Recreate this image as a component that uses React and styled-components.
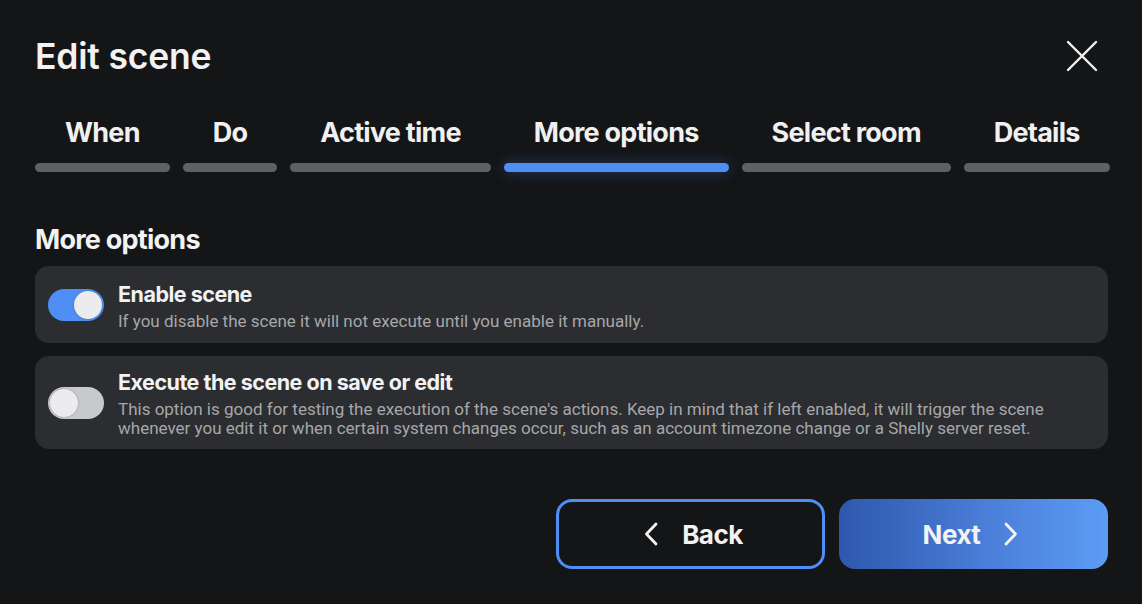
import React, { useState } from "react";
import styled, { createGlobalStyle } from "styled-components";

const GlobalStyle = createGlobalStyle`
  html, body {
    margin: 0;
    padding: 0;
    background: #141517;
  }
  body {
    font-family: "Inter", "Roboto", sans-serif;
    color: #f2f2f2;
  }
  * {
    box-sizing: border-box;
  }
`;

const steps = ["When", "Do", "Active time", "More options", "Select room", "Details"];

function CloseIcon() {
  return (
    <svg width="32" height="32" viewBox="0 0 32 32" fill="none">
      <path d="M2 2L30 30M30 2L2 30" stroke="#f4f4f4" strokeWidth="2.4" strokeLinecap="round" />
    </svg>
  );
}

function Chevron({ dir }) {
  const d = dir === "left" ? "M12 2L2.5 12L12 22" : "M2 2L11.5 12L2 22";
  return (
    <svg width="14" height="24" viewBox="0 0 14 24" fill="none">
      <path d={d} stroke="#f4f4f4" strokeWidth="2.8" strokeLinecap="round" strokeLinejoin="round" />
    </svg>
  );
}

function App() {
  const [enabled, setEnabled] = useState(true);
  const [runOnSave, setRunOnSave] = useState(false);

  return (
    <>
      <GlobalStyle />
      <Dialog>
        <Header>
          <Title>Edit scene</Title>
          <CloseButton aria-label="Close">
            <CloseIcon />
          </CloseButton>
        </Header>

        <Stepper>
          {steps.map((s) => (
            <Step key={s}>
              <span>{s}</span>
              <StepBar $active={s === "More options"} />
            </Step>
          ))}
        </Stepper>

        <SectionTitle>More options</SectionTitle>

        <OptionList>
          <OptionCard>
            <Toggle $on={enabled} onClick={() => setEnabled(!enabled)} />
            <OptionText>
              <h5>Enable scene</h5>
              <p>If you disable the scene it will not execute until you enable it manually.</p>
            </OptionText>
          </OptionCard>
          <OptionCard>
            <Toggle $on={runOnSave} onClick={() => setRunOnSave(!runOnSave)} />
            <OptionText>
              <h5>Execute the scene on save or edit</h5>
              <p>
                This option is good for testing the execution of the scene's actions. Keep in mind
                that if left enabled, it will trigger the scene whenever you edit it or when certain
                system changes occur, such as an account timezone change or a Shelly server reset.
              </p>
            </OptionText>
          </OptionCard>
        </OptionList>

        <Footer>
          <NavButton $variant="outline">
            <Chevron dir="left" />
            <span>Back</span>
          </NavButton>
          <NavButton $variant="primary">
            <span>Next</span>
            <Chevron dir="right" />
          </NavButton>
        </Footer>
      </Dialog>
    </>
  );
}

const Dialog = styled.div`
  width: 1142px;
  height: 604px;
  padding: 30px 34px 0 35px;
  display: flex;
  flex-direction: column;
`;

const Header = styled.div`
  display: flex;
  align-items: center;
  justify-content: space-between;
  height: 52px;
`;

const Title = styled.h1`
  margin: 0;
  font-size: 35.5px;
  font-weight: 600;
  letter-spacing: -0.2px;
  color: #f2f2f2;
`;

const CloseButton = styled.button`
  background: none;
  border: none;
  padding: 0;
  margin-right: 10px;
  width: 32px;
  height: 32px;
  display: flex;
  cursor: pointer;
`;

const Stepper = styled.div`
  display: flex;
  gap: 13px;
  margin-top: 35px;
`;

const Step = styled.div`
  display: flex;
  flex-direction: column;
  align-items: center;
  gap: 14px;

  span {
    padding: 0 30px;
    font-size: 27px;
    font-weight: 700;
    letter-spacing: -0.75px;
    line-height: 32px;
    color: #f0f0f0;
    white-space: nowrap;
  }
`;

const StepBar = styled.div`
  width: 100%;
  height: 9px;
  border-radius: 5px;
  background: ${(p) => (p.$active ? "#4f8ef5" : "#5e6064")};
  box-shadow: ${(p) => (p.$active ? "0 0 14px rgba(79, 142, 245, 0.35)" : "none")};
`;

const SectionTitle = styled.h2`
  margin: 52px 0 0;
  font-size: 27px;
  font-weight: 700;
  letter-spacing: -0.75px;
  line-height: 32px;
  color: #f2f2f2;
`;

const OptionList = styled.div`
  display: flex;
  flex-direction: column;
  gap: 13px;
  margin-top: 10px;
`;

const OptionCard = styled.div`
  display: flex;
  align-items: center;
  gap: 14px;
  padding: 11px 13px;
  min-height: 77px;
  background: #2c2d30;
  border-radius: 14px;
`;

const Toggle = styled.button`
  position: relative;
  flex-shrink: 0;
  width: 56px;
  height: 32px;
  border: none;
  border-radius: 16px;
  padding: 0;
  cursor: pointer;
  background: ${(p) => (p.$on ? "#4f8ef5" : "#c8c9cc")};

  &::after {
    content: "";
    position: absolute;
    top: 2px;
    left: ${(p) => (p.$on ? "26px" : "2px")};
    width: 28px;
    height: 28px;
    border-radius: 50%;
    background: #ececee;
    box-shadow: 0 0 2px rgba(0, 0, 0, 0.3);
  }
`;

const OptionText = styled.div`
  display: flex;
  flex-direction: column;

  h5 {
    margin: 0 0 3px;
    font-size: 21.5px;
    font-weight: 700;
    letter-spacing: -0.5px;
    line-height: 30px;
    color: #f2f2f2;
  }

  p {
    margin: 0;
    font-family: "Roboto", sans-serif;
    font-size: 17px;
    line-height: 19px;
    color: #a6a7aa;
  }
`;

const Footer = styled.div`
  display: flex;
  justify-content: flex-end;
  gap: 14px;
  margin-top: 50px;
`;

const NavButton = styled.button`
  width: 269px;
  height: 70px;
  border-radius: 16px;
  display: flex;
  align-items: center;
  justify-content: center;
  gap: 24px;
  padding: ${(p) => (p.$variant === "outline" ? "0 0 0 6px" : "0 6px 0 0")};
  cursor: pointer;
  font-family: "Inter", sans-serif;
  font-size: 26px;
  font-weight: 700;
  letter-spacing: -0.5px;
  color: #f2f2f2;
  border: ${(p) => (p.$variant === "outline" ? "3px solid #4f8ef5" : "none")};
  background: ${(p) =>
    p.$variant === "outline"
      ? "#141517"
      : "linear-gradient(90deg, #2e58ad 0%, #4a7ed8 55%, #5c9cf6 100%)"};
`;

export default App;
